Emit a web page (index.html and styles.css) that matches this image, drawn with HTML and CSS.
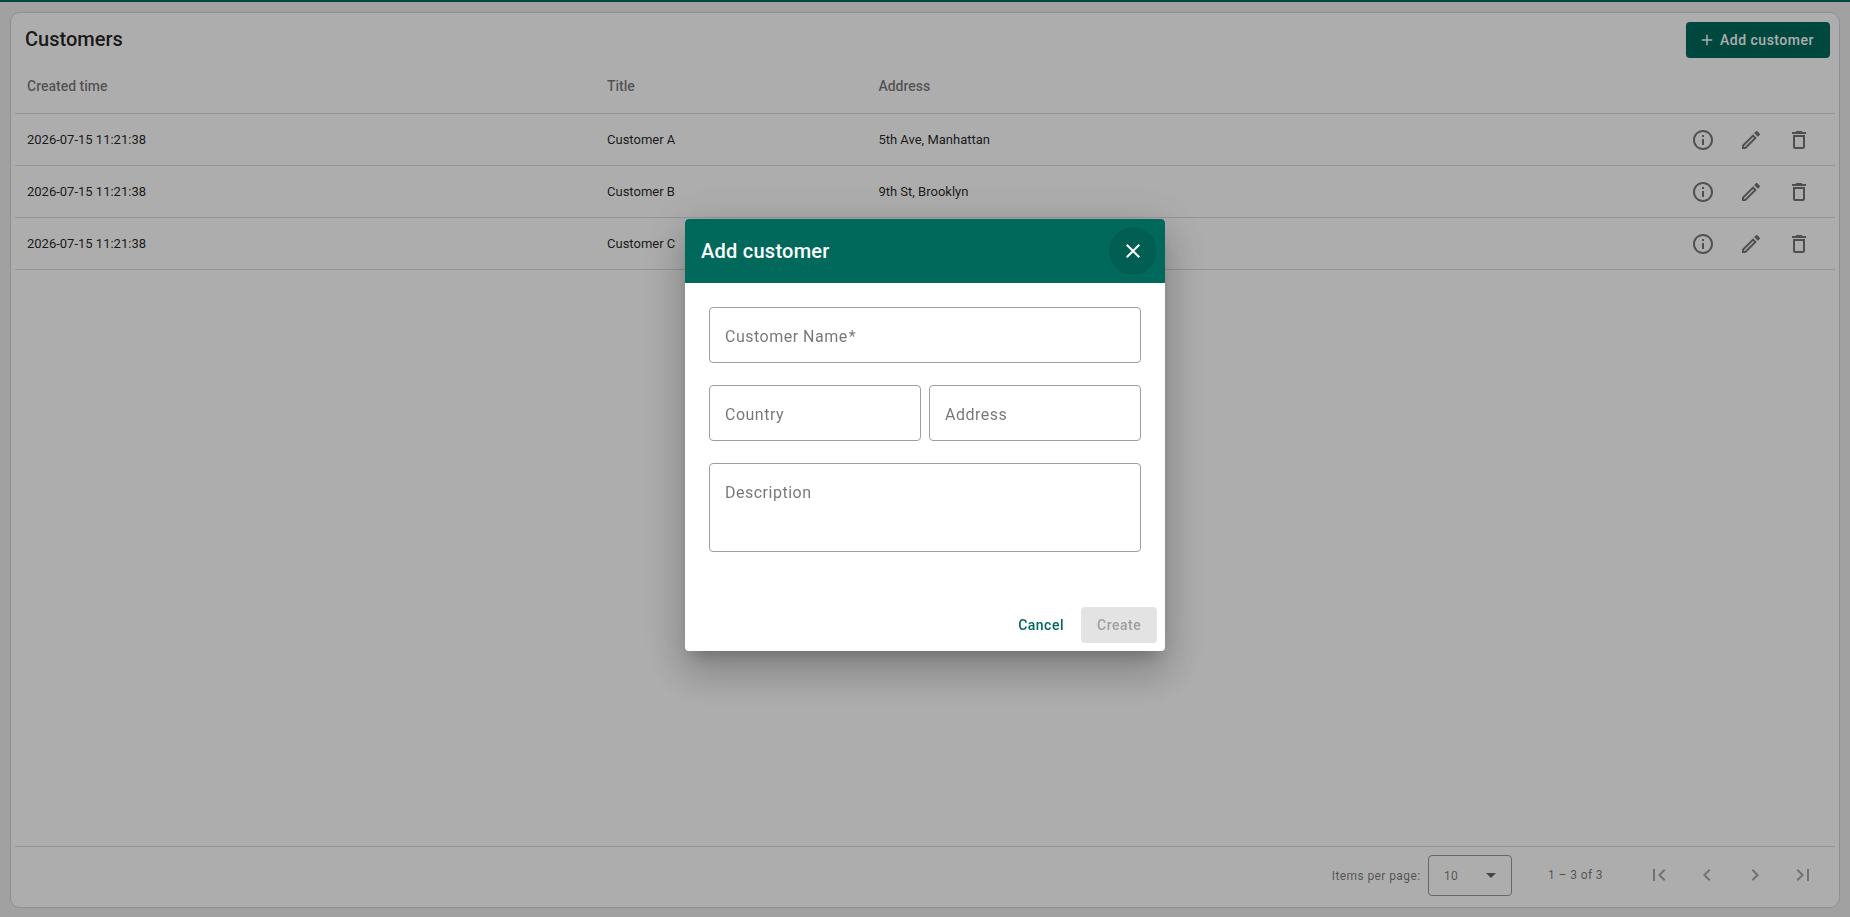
FILE: index.html
```html
<!DOCTYPE html>
<html lang="en">

<head>
    <meta charset="UTF-8">
    <meta name="viewport" content="width=device-width, initial-scale=1.0">
    <title>Customers</title>
    <link rel="stylesheet" href="styles.css">
</head>

<body>
    <svg class="sprite">
        <symbol id="info" viewBox="0 0 24 24"><path d="M11 7h2v2h-2zm0 4h2v6h-2zm1-9C6.48 2 2 6.48 2 12s4.48 10 10 10 10-4.48 10-10S17.52 2 12 2zm0 18c-4.41 0-8-3.59-8-8s3.59-8 8-8 8 3.59 8 8-3.59 8-8 8z"/></symbol>
        <symbol id="edit" viewBox="0 0 24 24"><path d="M14.06 9l.94.94L5.92 19H5v-.92L14.06 9m3.6-6c-.25 0-.51.1-.7.29l-1.83 1.83 3.75 3.75 1.83-1.83c.39-.39.39-1.04 0-1.41l-2.34-2.34c-.2-.2-.45-.29-.71-.29m-3.6 3.19L3 17.25V21h3.75L17.81 9.94l-3.75-3.75z"/></symbol>
        <symbol id="delete" viewBox="0 0 24 24"><path d="M6 19c0 1.1.9 2 2 2h8c1.1 0 2-.9 2-2V7H6v12zM8 9h8v10H8V9zm7.5-5l-1-1h-5l-1 1H5v2h14V4z"/></symbol>
    </svg>

    <main class="page">
        <section class="card">
            <header class="toolbar">
                <h1>Customers</h1>
                <button class="btn add-btn">
                    <svg class="plus" viewBox="0 0 24 24"><path d="M19 13h-6v6h-2v-6H5v-2h6V5h2v6h6z"/></svg>
                    Add customer
                </button>
            </header>

            <div class="table">
                <div class="row head">
                    <span>Created time</span>
                    <span>Title</span>
                    <span>Address</span>
                </div>
                <div class="row">
                    <span>2026-07-15 11:21:38</span>
                    <span>Customer A</span>
                    <span>5th Ave, Manhattan</span>
                    <div class="actions">
                        <svg><use href="#info"/></svg>
                        <svg><use href="#edit"/></svg>
                        <svg><use href="#delete"/></svg>
                    </div>
                </div>
                <div class="row">
                    <span>2026-07-15 11:21:38</span>
                    <span>Customer B</span>
                    <span>9th St, Brooklyn</span>
                    <div class="actions">
                        <svg><use href="#info"/></svg>
                        <svg><use href="#edit"/></svg>
                        <svg><use href="#delete"/></svg>
                    </div>
                </div>
                <div class="row">
                    <span>2026-07-15 11:21:38</span>
                    <span>Customer C</span>
                    <span></span>
                    <div class="actions">
                        <svg><use href="#info"/></svg>
                        <svg><use href="#edit"/></svg>
                        <svg><use href="#delete"/></svg>
                    </div>
                </div>
            </div>

            <footer class="paginator">
                <span class="per-page">Items per page:</span>
                <div class="select">
                    <span>10</span>
                    <svg class="arrow" viewBox="0 0 10 5"><path d="M0 0h10L5 5z"/></svg>
                </div>
                <span class="range">1 – 3 of 3</span>
                <div class="pages">
                    <svg viewBox="0 0 24 24"><path d="M18.41 16.59L13.82 12l4.59-4.59L17 6l-6 6 6 6zM6 6h2v12H6z"/></svg>
                    <svg viewBox="0 0 24 24"><path d="M15.41 7.41L14 6l-6 6 6 6 1.41-1.41L10.83 12z"/></svg>
                    <svg viewBox="0 0 24 24"><path d="M10 6L8.59 7.41 13.17 12l-4.58 4.59L10 18l6-6z"/></svg>
                    <svg viewBox="0 0 24 24"><path d="M5.59 7.41L10.18 12l-4.59 4.59L7 18l6-6-6-6zM16 6h2v12h-2z"/></svg>
                </div>
            </footer>
        </section>
    </main>

    <div class="backdrop">
        <div class="dialog">
            <header class="dialog-head">
                <h2>Add customer</h2>
                <button class="close">
                    <svg viewBox="0 0 24 24"><path d="M19 6.41L17.59 5 12 10.59 6.41 5 5 6.41 10.59 12 5 17.59 6.41 19 12 13.41 17.59 19 19 17.59 13.41 12z"/></svg>
                </button>
            </header>
            <form class="fields">
                <div class="field">Customer Name<span class="required">*</span></div>
                <div class="pair">
                    <div class="field">Country</div>
                    <div class="field">Address</div>
                </div>
                <div class="field area">Description</div>
            </form>
            <footer class="dialog-actions">
                <button class="btn cancel">Cancel</button>
                <button class="btn create" disabled>Create</button>
            </footer>
        </div>
    </div>
</body>

</html>
```

FILE: styles.css
```css
* {
    margin: 0;
    padding: 0;
    box-sizing: border-box;
    font-family: Roboto, "Liberation Sans", sans-serif;
}

:root {
    --primary: #00695c;
    --line: #dcdcdc;
    --muted: rgba(0, 0, 0, 0.54);
}

body {
    background-color: #eee;
    color: rgba(0, 0, 0, 0.87);
    overflow: hidden;
}

.sprite {
    display: none;
}

.page {
    display: flex;
    height: 100vh;
    padding: 10px 10px 9px;
    border-top: 2px solid var(--primary);
}

.card {
    flex: 1;
    display: flex;
    flex-direction: column;
    padding: 4px;
    background-color: #fff;
    border: 1px solid #d2d2da;
    border-radius: 10px;
}

.toolbar {
    display: flex;
    justify-content: space-between;
    align-items: flex-start;
    height: 41px;
    padding: 5px 5px 0 10px;
}

h1 {
    font-size: 20px;
    font-weight: 500;
    line-height: 34px;
}

.btn {
    height: 36px;
    padding: 0 16px;
    border: none;
    border-radius: 4px;
    background: none;
    font-size: 14px;
    font-weight: 500;
    letter-spacing: 0.5px;
}

.add-btn {
    display: flex;
    align-items: center;
    width: 144px;
    padding: 0 12px;
    background-color: var(--primary);
    color: #fff;
    white-space: nowrap;
}

.plus {
    width: 18px;
    height: 18px;
    margin-right: 4px;
    fill: #fff;
}

.table {
    flex: 1;
}

.row {
    display: grid;
    grid-template-columns: 580px 271.4px 1fr 144px;
    align-items: center;
    height: 52px;
    padding: 0 12px;
    border-bottom: 1px solid var(--line);
    font-size: 13px;
}

.head {
    height: 56px;
    color: var(--muted);
    font-size: 14px;
    font-weight: 500;
}

.actions,
.pages {
    display: flex;
}

.actions svg,
.pages svg {
    width: 48px;
    height: 24px;
    fill: rgba(0, 0, 0, 0.54);
}

.paginator {
    display: flex;
    justify-content: flex-end;
    align-items: center;
    height: 57px;
    padding: 0 8px 0 0;
    border-top: 1px solid var(--line);
    color: var(--muted);
    font-size: 12px;
    letter-spacing: 0.4px;
}

.per-page {
    margin-top: 1px;
}

.select {
    display: flex;
    justify-content: space-between;
    align-items: center;
    width: 84px;
    height: 41px;
    margin: 1px 36px 0 7.5px;
    padding: 0 15px;
    border: 1px solid #999;
    border-radius: 4px;
}

.arrow {
    width: 10px;
    height: 5px;
    fill: rgba(0, 0, 0, 0.6);
}

.pages {
    margin-left: 32px;
}

.pages svg {
    fill: rgba(0, 0, 0, 0.34);
}

/* dialog */
.backdrop {
    position: fixed;
    inset: 0;
    display: flex;
    justify-content: center;
    align-items: flex-start;
    padding-top: 219px;
    background-color: rgba(0, 0, 0, 0.32);
}

.dialog {
    width: 480px;
    height: 432px;
    display: flex;
    flex-direction: column;
    background-color: #fff;
    border-radius: 4px;
    overflow: hidden;
    box-shadow: 0 11px 15px -7px rgba(0, 0, 0, 0.2), 0 24px 38px 3px rgba(0, 0, 0, 0.14), 0 9px 46px 8px rgba(0, 0, 0, 0.12);
}

.dialog-head {
    display: flex;
    justify-content: space-between;
    align-items: center;
    height: 64px;
    padding: 0 8px 0 16px;
    background-color: var(--primary);
    color: #fff;
}

h2 {
    font-size: 20px;
    font-weight: 500;
    letter-spacing: 0.25px;
}

.close {
    display: flex;
    justify-content: center;
    align-items: center;
    width: 48px;
    height: 48px;
    border: none;
    border-radius: 50%;
    background-color: rgba(0, 0, 0, 0.1);
}

.close svg {
    width: 24px;
    height: 24px;
    fill: #fff;
}

.fields {
    flex: 1;
    display: flex;
    flex-direction: column;
    gap: 22px;
    padding: 24px;
}

.field {
    flex: 1;
    padding: 0 15px;
    border: 1px solid #9e9e9e;
    border-radius: 4px;
    color: rgba(0, 0, 0, 0.54);
    font-size: 16px;
    line-height: 58px;
    letter-spacing: 0.5px;
}

.fields > .field {
    flex: none;
    height: 56px;
}

.required {
    margin-left: 1px;
}

.pair {
    display: flex;
    gap: 8px;
    height: 56px;
}

.fields > .area {
    height: 89px;
}

.dialog-actions {
    display: flex;
    justify-content: flex-end;
    padding: 8px;
}

.cancel {
    margin-right: 1px;
    color: var(--primary);
}

.create {
    width: 76px;
    background-color: #e3e3e3;
    color: #9f9f9f;
}
```
